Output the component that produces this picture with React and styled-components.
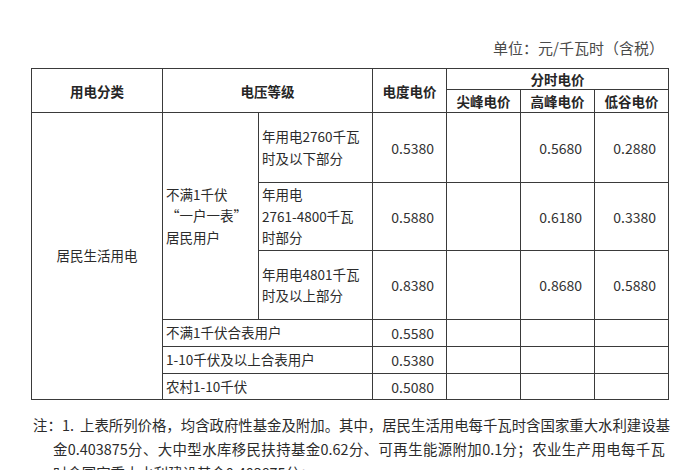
import styled, { createGlobalStyle } from "styled-components";

const GlobalStyle = createGlobalStyle`
  html, body {
    margin: 0;
    background: #fff;
  }
  body {
    font-family: "Noto Sans CJK SC", "Noto Sans", sans-serif;
    color: #2b2b2b;
  }
`;

const Page = styled.div`
  width: 700px;
  height: 470px;
  overflow: hidden;
  padding-left: 31px;
  box-sizing: border-box;
`;

const Unit = styled.div`
  width: 637px;
  height: 68px;
  box-sizing: border-box;
  padding: 36px 4px 0 0;
  text-align: right;
  font-size: 15px;
  line-height: 24px;
  color: #4a4a4a;
`;

const Table = styled.table`
  width: 637px;
  border-collapse: collapse;
  table-layout: fixed;
  font-size: 13.5px;

  td,
  th {
    border: 1.5px solid #3a3a3a;
    padding: 0;
  }
`;

const HeadCell = styled.th`
  font-weight: 700;
  text-align: center;
  vertical-align: middle;
  height: ${(p) => p.$h}px;
  color: #262626;
  line-height: 18px;
`;

const Cell = styled.td`
  text-align: ${(p) => (p.$center ? "center" : "left")};
  vertical-align: middle;
  padding: 0 3px !important;
  line-height: 21.5px;
  height: ${(p) => p.$h}px;
`;

const Price = styled.td`
  text-align: right;
  vertical-align: middle;
  padding: 0 12px 0 0 !important;
  font-size: 14px;
  color: #333;
`;

const Note = styled.div`
  margin-top: 13px;
  width: 634px;
  font-size: 14.4px;
  line-height: 24px;
  color: #2b2b2b;
`;

const NoteLine = styled.div`
  white-space: nowrap;
  margin-left: ${(p) => (p.$lead ? 2 : 22)}px;
  text-align: ${(p) => (p.$fill ? "justify" : "left")};
  text-align-last: ${(p) => (p.$fill ? "justify" : "left")};
`;

const Mark = styled.span`
  display: inline-block;
  width: ${(p) => p.$w}px;
  white-space: nowrap;
  text-align-last: left;
`;

const tiers = [
  { label: ["年用电2760千瓦", "时及以下部分"], base: "0.5380", high: "0.5680", low: "0.2880", h: 69 },
  { label: ["年用电", "2761-4800千瓦", "时部分"], base: "0.5880", high: "0.6180", low: "0.3380", h: 67 },
  { label: ["年用电4801千瓦", "时及以上部分"], base: "0.8380", high: "0.8680", low: "0.5880", h: 68 },
];

const others = [
  { label: "不满1千伏合表用户", base: "0.5580", h: 26 },
  { label: "1-10千伏及以上合表用户", base: "0.5380", h: 26 },
  { label: "农村1-10千伏", base: "0.5080", h: 25 },
];

function Lines({ items }) {
  return items.map((t, i) => (
    <span key={i}>
      {i > 0 && <br />}
      {t}
    </span>
  ));
}

export default function App() {
  return (
    <>
      <GlobalStyle />
      <Page>
        <Unit>单位：元/千瓦时（含税）</Unit>
        <Table>
          <colgroup>
            <col style={{ width: 131 }} />
            <col style={{ width: 96 }} />
            <col style={{ width: 114 }} />
            <col style={{ width: 74 }} />
            <col style={{ width: 74 }} />
            <col style={{ width: 74 }} />
            <col style={{ width: 74 }} />
          </colgroup>
          <thead>
            <tr>
              <HeadCell rowSpan={2} $h={21}>用电分类</HeadCell>
              <HeadCell rowSpan={2} colSpan={2} $h={21}>电压等级</HeadCell>
              <HeadCell rowSpan={2} $h={21}>电度电价</HeadCell>
              <HeadCell colSpan={3} $h={20}>分时电价</HeadCell>
            </tr>
            <tr>
              <HeadCell $h={22}>尖峰电价</HeadCell>
              <HeadCell $h={22}>高峰电价</HeadCell>
              <HeadCell $h={22}>低谷电价</HeadCell>
            </tr>
          </thead>
          <tbody>
            {tiers.map((t, i) => (
              <tr key={t.base}>
                {i === 0 && (
                  <Cell rowSpan={6} $center>
                    居民生活用电
                  </Cell>
                )}
                {i === 0 && (
                  <Cell rowSpan={3}>
                    <Lines items={["不满1千伏", "“一户一表”", "居民用户"]} />
                  </Cell>
                )}
                <Cell $h={t.h}>
                  <Lines items={t.label} />
                </Cell>
                <Price>{t.base}</Price>
                <Price />
                <Price>{t.high}</Price>
                <Price>{t.low}</Price>
              </tr>
            ))}
            {others.map((o) => (
              <tr key={o.label}>
                <Cell colSpan={2} $h={o.h}>
                  {o.label}
                </Cell>
                <Price>{o.base}</Price>
                <Price />
                <Price />
                <Price />
              </tr>
            ))}
          </tbody>
        </Table>
        <Note>
          <NoteLine $lead $fill>
            <Mark $w={29}>注：</Mark>
            <Mark $w={18}>1.</Mark>
            上表所列价格，均含政府性基金及附加。其中，居民生活用电每千瓦时含国家重大水利建设基
          </NoteLine>
          <NoteLine $fill>
            金0.403875分、大中型水库移民扶持基金0.62分、可再生能源附加0.1分；农业生产用电每千瓦
          </NoteLine>
          <NoteLine>时含国家重大水利建设基金0.403875分；</NoteLine>
        </Note>
      </Page>
    </>
  );
}
